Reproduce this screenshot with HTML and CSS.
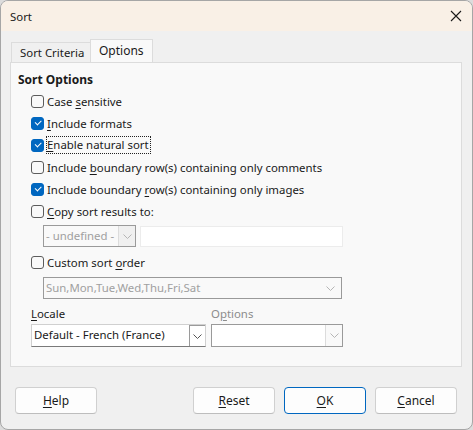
FILE: index.html
```html
<!DOCTYPE html>
<html lang="en">
<head>
    <title>Sort</title>
    <link rel="stylesheet" href="styles.css">
</head>
<body>
    <div class="window">

        <div class="titlebar">
            <span class="title">Sort</span>
            <svg class="close" width="12" height="12" viewBox="0 0 12 12">
                <path d="M1 1 L11 11 M11 1 L1 11" stroke="#1a1a1a" stroke-width="1.1" fill="none"/>
            </svg>
        </div>

        <div class="tabs">
            <div class="tab">Sort Criteria</div>
            <div class="tab active">Options</div>
        </div>

        <div class="panel">
            <div class="heading">Sort Options</div>

            <div class="options">
                <label class="row"><span class="check"></span><span>Case <u>s</u>ensitive</span></label>
                <label class="row"><span class="check on"></span><span><u>I</u>nclude formats</span></label>
                <label class="row"><span class="check on"></span><span class="focus"><u>E</u>nable natural sort</span></label>
                <label class="row"><span class="check"></span><span>Include <u>b</u>oundary row(s) containing only comments</span></label>
                <label class="row"><span class="check on"></span><span>Include boundary <u>r</u>ow(s) containing only images</span></label>
                <label class="row"><span class="check"></span><span><u>C</u>opy sort results to:</span></label>

                <div class="sub copy">
                    <div class="combo disabled small">
                        <span class="value">- undefined -</span>
                        <span class="arrow"><svg width="9" height="5" viewBox="0 0 9 5"><path d="M0.5 0.5 L4.5 4.5 L8.5 0.5" stroke="#b5b5b5" fill="none"/></svg></span>
                    </div>
                    <div class="field"></div>
                </div>

                <label class="row custom"><span class="check"></span><span>Custom sort <u>o</u>rder</span></label>

                <div class="sub">
                    <div class="combo disabled wide">
                        <span class="value">Sun,Mon,Tue,Wed,Thu,Fri,Sat</span>
                        <span class="arrow"><svg width="9" height="5" viewBox="0 0 9 5"><path d="M0.5 0.5 L4.5 4.5 L8.5 0.5" stroke="#b5b5b5" fill="none"/></svg></span>
                    </div>
                </div>

                <div class="locale">
                    <div class="group">
                        <div class="label"><u>L</u>ocale</div>
                        <div class="combo locale-box">
                            <span class="value">Default - French (France)</span>
                            <span class="arrow"><svg width="9" height="5" viewBox="0 0 9 5"><path d="M0.5 0.5 L4.5 4.5 L8.5 0.5" stroke="#555" fill="none"/></svg></span>
                        </div>
                    </div>
                    <div class="group">
                        <div class="label dim">O<u>p</u>tions</div>
                        <div class="combo disabled algo">
                            <span class="value"></span>
                            <span class="arrow"><svg width="9" height="5" viewBox="0 0 9 5"><path d="M0.5 0.5 L4.5 4.5 L8.5 0.5" stroke="#b5b5b5" fill="none"/></svg></span>
                        </div>
                    </div>
                </div>
            </div>
        </div>

        <div class="buttons">
            <button><u>H</u>elp</button>
            <div class="spacer"></div>
            <button><u>R</u>eset</button>
            <button class="default"><u>O</u>K</button>
            <button><u>C</u>ancel</button>
        </div>

    </div>
</body>
</html>
```

FILE: styles.css
```css
* {
    margin: 0;
    padding: 0;
    box-sizing: border-box;
}

body {
    width: 473px;
    height: 430px;
    background: #dcdcdc;
    font-family: "Noto Sans", "Open Sans", sans-serif;
    font-size: 11.4px;
    color: #1a1a1a;
}

u {
    text-decoration-thickness: 1px;
    text-underline-offset: 2px;
}

.window {
    width: 473px;
    height: 430px;
    background: #f0f0f0;
    border: 1px solid #a6a6a6;
    border-radius: 8px;
    overflow: hidden;
    display: flex;
    flex-direction: column;
}

.titlebar {
    height: 30px;
    background: #f9f0e6;
    display: flex;
    align-items: center;
    justify-content: space-between;
    padding: 0 9px 0 9px;
}

.close {
    margin-right: 1px;
}

.tabs {
    display: flex;
    align-items: flex-end;
    padding-left: 10px;
    margin-top: 8px;
    height: 23px;
}

.tab {
    height: 20px;
    padding: 0 8px;
    line-height: 19px;
    white-space: nowrap;
    background: #f0f0f0;
    border: 1px solid #dcdcdc;
    border-bottom: none;
    width: 80px;
}

.tab.active {
    height: 24px;
    width: 63px;
    margin-left: -1px;
    margin-bottom: -1px;
    padding: 0 8px;
    background: #f9f9f9;
    line-height: 21px;
    font-size: 12px;
}

.panel {
    margin: 0 10px 0 9px;
    height: 305px;
    background: #f9f9f9;
    border: 1px solid #dcdcdc;
    padding: 7px 0 0 7px;
}

.heading {
    font-weight: bold;
    font-size: 12px;
    line-height: 20px;
}

.options {
    margin-top: 0;
    padding-left: 13px;
}

.row {
    height: 22px;
    display: flex;
    align-items: center;
    white-space: nowrap;
}

.check {
    width: 13px;
    height: 13px;
    border: 1px solid #5c5c5c;
    border-radius: 3px;
    background: #f9f9f9;
    margin-right: 3px;
    flex-shrink: 0;
    display: flex;
    align-items: center;
    justify-content: center;
}

.check.on {
    background: #0067c0;
    border-color: #0067c0;
}

.check.on::after {
    content: "";
    width: 5px;
    height: 2.5px;
    border-left: 1.2px solid #fff;
    border-bottom: 1.2px solid #fff;
    transform: rotate(-45deg);
    margin-top: -2px;
}

.focus {
    outline: 1px dotted #222;
    outline-offset: 0;
    line-height: 16px;
    padding-right: 1px;
}

.sub {
    padding-left: 12px;
    display: flex;
    gap: 4px;
}

.copy {
    margin-top: 3px;
}

.combo {
    height: 22px;
    display: flex;
    border: 1px solid #8a8a8a;
    background: #fff;
}

.combo .value {
    flex: 1;
    padding-left: 2px;
    line-height: 20px;
    white-space: nowrap;
    overflow: hidden;
}

.combo .arrow {
    width: 17px;
    display: flex;
    align-items: center;
    justify-content: center;
    background: #f9f9f9;
    border-left: 1px solid #dcdcdc;
}

.combo.disabled {
    border-color: #9a9a9a;
    background: #f9f9f9;
    color: #a0a0a0;
}

.combo.small {
    width: 93px;
}

.combo.small .arrow {
    background: #f0f0f0;
}

.field {
    width: 203px;
    height: 21px;
    margin-top: 1px;
    background: #fff;
    border: 1px solid #ececec;
}

.custom {
    margin-top: 4px;
}

.sub .wide {
    width: 299px;
    margin-top: 4px;
}

.combo.wide .arrow {
    border-left: none;
    width: 21px;
}

.locale {
    display: flex;
    gap: 5px;
    margin-top: 5px;
}

.label {
    line-height: 20px;
    margin-bottom: 0;
}

.label.dim {
    color: #8c8c8c;
}

.locale-box {
    width: 175px;
    height: 23px;
    border-color: #d0d0d0;
    border-bottom: 1px solid #7a7a7a;
}

.locale-box .value {
    padding-left: 2px;
}

.locale-box .arrow {
    width: 16px;
    border: 1px solid #9a9a9a;
    border-right: none;
    border-bottom: none;
    background: #fff;
}

.combo.algo {
    width: 132px;
    height: 23px;
    background: #fff;
}

.buttons {
    display: flex;
    gap: 9px;
    padding: 20px 15px 0 14px;
}

.spacer {
    flex: 1;
}

button {
    width: 82px;
    height: 27px;
    font-family: inherit;
    font-size: 12px;
    color: #1a1a1a;
    background: #fdfdfd;
    border: 1px solid #d0d0d0;
    border-bottom-color: #bdbdbd;
    border-radius: 4px;
}

button.default {
    border: 1px solid #0067c0;
}
```
